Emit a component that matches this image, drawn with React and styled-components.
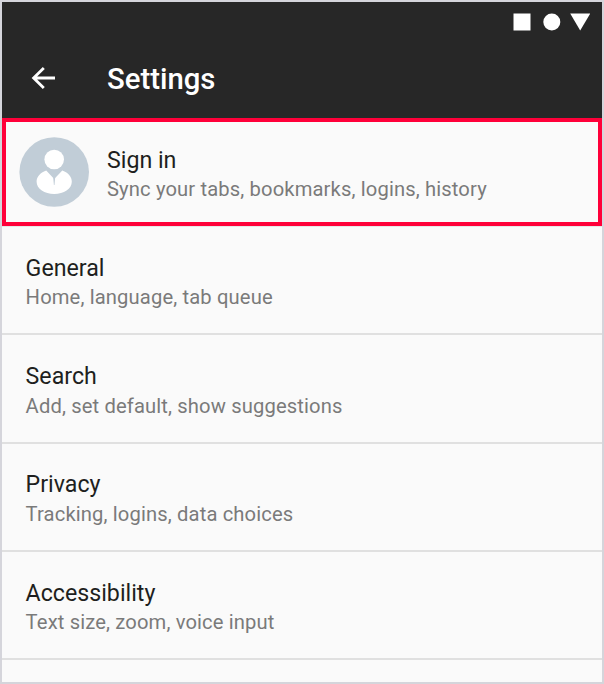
import React from "react";
import styled, { createGlobalStyle } from "styled-components";

const GlobalStyle = createGlobalStyle`
  *, *::before, *::after { box-sizing: border-box; }
  body { margin: 0; background: #fafafa; font-family: Roboto, sans-serif; }
`;

const Screen = styled.div`
  width: 604px;
  height: 684px;
  border: 2px solid #d5d5db;
  background: #fafafa;
  overflow: hidden;
`;

const Header = styled.header`
  height: 116px;
  background: #272727;
  color: #fff;
  display: flex;
  flex-direction: column;
`;

const StatusBar = styled.div`
  height: 40px;
  display: flex;
  justify-content: flex-end;
  padding: 11px 12px 0 0;
`;

const Toolbar = styled.div`
  height: 72px;
  display: flex;
  align-items: center;
  padding-left: 29px;
`;

const BackButton = styled.button`
  width: 76px;
  height: 24px;
  padding: 0;
  border: 0;
  background: none;
  svg { display: block; }
`;

const Title = styled.h1`
  margin: 2px 0 0;
  font-size: 29.3px;
  line-height: 36px;
  font-weight: 500;
`;

const List = styled.main`
  border-top: 1px solid #e6e8e8;
  padding-top: 0.1px;
`;

const Row = styled.div`
  height: 108.33px;
  border-bottom: 2px solid #e0e0e0;
  padding: 25.6px 23.6px 0;
`;

const Account = styled.div`
  height: 108px;
  border: 4px solid #ff0039;
  display: flex;
  align-items: flex-start;
  padding: 15px 0 0 13px;
  gap: 18px;
`;

const AccountText = styled.div`
  padding-top: 7.7px;
`;

const Label = styled.div`
  font-size: 23.2px;
  line-height: 31px;
  color: #1e1f20;
  white-space: nowrap;
`;

const Summary = styled.div`
  margin-top: -0.4px;
  font-size: 20.2px;
  letter-spacing: 0.13px;
  line-height: 28px;
  color: #7a7a7a;
  white-space: nowrap;
`;

const items = [
  ["General", "Home, language, tab queue"],
  ["Search", "Add, set default, show suggestions"],
  ["Privacy", "Tracking, logins, data choices"],
  ["Accessibility", "Text size, zoom, voice input"],
];

const StatusIcons = () => (
  <svg width="78" height="20" viewBox="0 0 78 20" fill="#fff">
    <rect x="1.5" y="0.5" width="17" height="17" />
    <circle cx="39.8" cy="9" r="8.5" />
    <path d="M58.2 0.6h20L68.2 17.5z" />
  </svg>
);

const BackArrow = () => (
  <svg width="27" height="24" viewBox="0 0 27 24" fill="none" stroke="#fff" strokeWidth="2.8">
    <path d="M24 12H2M12.8 1.9 2.6 12 12.8 22.1" />
  </svg>
);

const Avatar = () => (
  <svg width="70" height="70" viewBox="0 0 70 70">
    <circle cx="35.2" cy="35" r="34.8" fill="#c1cdd7" />
    <circle cx="35.2" cy="22.5" r="9.8" fill="#fff" />
    <path
      d="M27.2 33.6 35.2 42 43.3 33.6C49.5 35.8 52.8 40 52.8 44.8C52.8 52 44.8 57 35.2 57S17.6 52 17.6 44.8C17.6 40 21 35.8 27.2 33.6Z"
      fill="#fff"
    />
    <path d="M34.2 40.5h2l-.7 7.5h-.6Z" fill="#c1cdd7" />
  </svg>
);

export default function App() {
  return (
    <>
      <GlobalStyle />
      <Screen>
        <Header>
          <StatusBar><StatusIcons /></StatusBar>
          <Toolbar>
            <BackButton aria-label="Back"><BackArrow /></BackButton>
            <Title>Settings</Title>
          </Toolbar>
        </Header>
        <Account>
          <Avatar />
          <AccountText>
            <Label>Sign in</Label>
            <Summary>Sync your tabs, bookmarks, logins, history</Summary>
          </AccountText>
        </Account>
        <List>
          {items.map(([label, summary]) => (
            <Row key={label}>
              <Label>{label}</Label>
              <Summary>{summary}</Summary>
            </Row>
          ))}
        </List>
      </Screen>
    </>
  );
}
